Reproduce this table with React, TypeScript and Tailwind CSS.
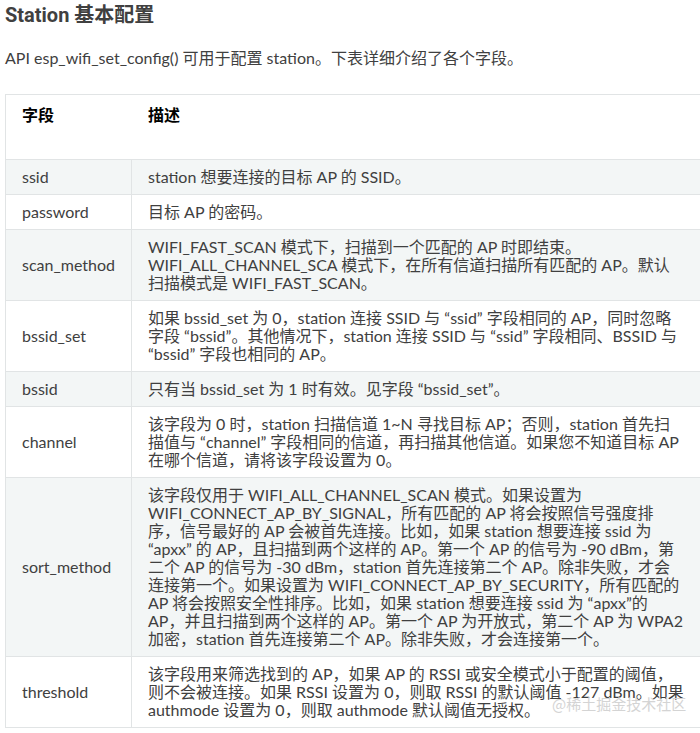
import React from "react";

type Row = { field: string; lines: string[]; gray: boolean };

const rows: Row[] = [
  { field: "ssid", lines: ["station 想要连接的目标 AP 的 SSID。"], gray: true },
  { field: "password", lines: ["目标 AP 的密码。"], gray: false },
  {
    field: "scan_method",
    lines: [
      "WIFI_FAST_SCAN 模式下，扫描到一个匹配的 AP 时即结束。",
      "WIFI_ALL_CHANNEL_SCA 模式下，在所有信道扫描所有匹配的 AP。默认",
      "扫描模式是 WIFI_FAST_SCAN。",
    ],
    gray: true,
  },
  {
    field: "bssid_set",
    lines: [
      "如果 bssid_set 为 0，station 连接 SSID 与 “ssid” 字段相同的 AP，同时忽略",
      "字段 “bssid”。其他情况下，station 连接 SSID 与 “ssid” 字段相同、BSSID 与",
      "“bssid” 字段也相同的 AP。",
    ],
    gray: false,
  },
  { field: "bssid", lines: ["只有当 bssid_set 为 1 时有效。见字段 “bssid_set”。"], gray: true },
  {
    field: "channel",
    lines: [
      "该字段为 0 时，station 扫描信道 1~N 寻找目标 AP；否则，station 首先扫",
      "描值与 “channel” 字段相同的信道，再扫描其他信道。如果您不知道目标 AP",
      "在哪个信道，请将该字段设置为 0。",
    ],
    gray: false,
  },
  {
    field: "sort_method",
    lines: [
      "该字段仅用于 WIFI_ALL_CHANNEL_SCAN 模式。如果设置为",
      "WIFI_CONNECT_AP_BY_SIGNAL，所有匹配的 AP 将会按照信号强度排",
      "序，信号最好的 AP 会被首先连接。比如，如果 station 想要连接 ssid 为",
      "“apxx” 的 AP，且扫描到两个这样的 AP。第一个 AP 的信号为 -90 dBm，第",
      "二个 AP 的信号为 -30 dBm，station 首先连接第二个 AP。除非失败，才会",
      "连接第一个。如果设置为 WIFI_CONNECT_AP_BY_SECURITY，所有匹配的",
      "AP 将会按照安全性排序。比如，如果 station 想要连接 ssid 为 “apxx”的",
      "AP，并且扫描到两个这样的 AP。第一个 AP 为开放式，第二个 AP 为 WPA2",
      "加密，station 首先连接第二个 AP。除非失败，才会连接第一个。",
    ],
    gray: true,
  },
  {
    field: "threshold",
    lines: [
      "该字段用来筛选找到的 AP，如果 AP 的 RSSI 或安全模式小于配置的阈值，",
      "则不会被连接。如果 RSSI 设置为 0，则取 RSSI 的默认阈值 -127 dBm。如果",
      "authmode 设置为 0，则取 authmode 默认阈值无授权。",
    ],
    gray: false,
  },
];

export default function App() {
  return (
    <div
      className="relative w-[700px] h-[733px] overflow-hidden bg-white text-[#404040]"
      style={{ fontFamily: "Lato, 'Noto Sans CJK SC', sans-serif" }}
    >
      <div className="pl-[5px]">
        <div
          className="pt-[1px] h-[28px] leading-[28px] text-[20px] font-bold text-[#404040]"
          style={{ fontFamily: "Roboto, 'Noto Sans CJK SC', sans-serif" }}
        >
          Station 基本配置
        </div>
        <p className="mt-[20px] leading-[20px] text-[16px] whitespace-nowrap">
          API esp_wifi_set_config() 可用于配置 station。下表详细介绍了各个字段。
        </p>
        <div className="mt-[26px] w-[740px] border-l border-t border-[#e1e4e5] text-[16px] leading-[18px]">
          <div className="flex h-[65px] border-b border-[#e1e4e5] bg-white font-bold text-black">
            <div className="w-[126px] shrink-0 pl-[16px] pt-[11px]">字段</div>
            <div className="pl-[16px] pt-[11px]">描述</div>
          </div>
          {rows.map((r) => (
            <div
              key={r.field}
              className={`flex border-b border-[#e1e4e5] ${r.gray ? "bg-[#f3f6f6]" : "bg-white"}`}
            >
              <div className="w-[126px] shrink-0 flex items-center pl-[16px] border-r border-[#e1e4e5]">
                {r.field}
              </div>
              <div className="pl-[16px] py-[8px]">
                {r.lines.map((l, i) => (
                  <div key={i} className="whitespace-nowrap">
                    {l}
                  </div>
                ))}
              </div>
            </div>
          ))}
        </div>
      </div>
      <div
        className="absolute left-[552px] top-[694px] text-[15px] leading-[20px] text-[#d4d4d4] whitespace-nowrap"
        style={{ fontFamily: "'Noto Sans CJK SC', sans-serif" }}
      >
        @稀土掘金技术社区
      </div>
    </div>
  );
}
